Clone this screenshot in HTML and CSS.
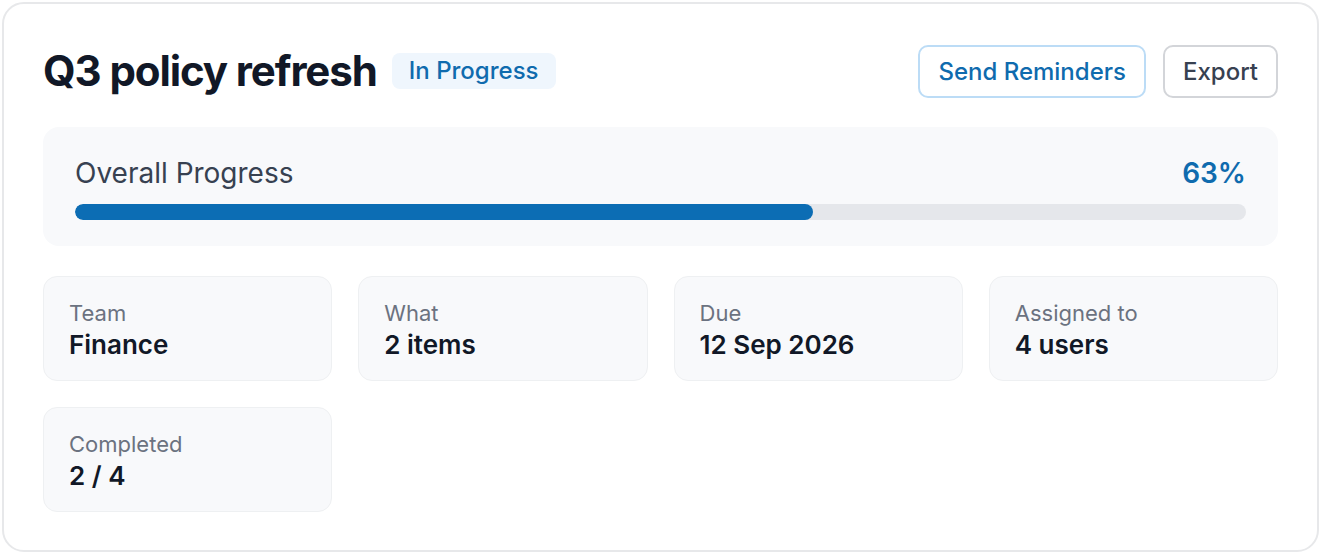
FILE: index.html
```html
<!DOCTYPE html>
<html>
<head>
<meta charset="utf-8">
<link rel="stylesheet" href="styles.css">
</head>
<body>
<div class="card">
  <div class="header">
    <div class="title-group">
      <h1 class="title">Q3 policy refresh</h1>
      <span class="badge">In Progress</span>
    </div>
    <div class="actions">
      <button class="btn btn-primary">Send Reminders</button>
      <button class="btn btn-default">Export</button>
    </div>
  </div>
  <div class="progress-panel">
    <div class="progress-head">
      <span class="progress-label">Overall Progress</span>
      <span class="progress-value">63%</span>
    </div>
    <div class="bar"><div class="bar-fill" style="width:63%"></div></div>
  </div>
  <div class="stats">
    <div class="stat"><div class="stat-label">Team</div><div class="stat-value">Finance</div></div>
    <div class="stat"><div class="stat-label">What</div><div class="stat-value">2 items</div></div>
    <div class="stat"><div class="stat-label">Due</div><div class="stat-value">12 Sep 2026</div></div>
    <div class="stat"><div class="stat-label">Assigned to</div><div class="stat-value">4 users</div></div>
    <div class="stat"><div class="stat-label">Completed</div><div class="stat-value">2 / 4</div></div>
  </div>
</div>
</body>
</html>
```

FILE: styles.css
```css
* { box-sizing: border-box; }
html, body { margin: 0; background: #ffffff; }
body {
  padding: 2px 1px 2px 2px;
  font-family: Inter, "Noto Sans", sans-serif;
  color: #111827;
}
.card {
  height: 550px;
  border: 2px solid #e7e8ea;
  border-radius: 22px;
  background: #fff;
  padding: 40px 39px 38px 39px;
}
.header {
  display: flex;
  align-items: center;
  justify-content: space-between;
  height: 54px;
}
.title-group { display: flex; align-items: center; gap: 15px; }
.title {
  margin: 0;
  font-size: 42px;
  font-weight: 700;
  letter-spacing: -1.1px;
  line-height: 1;
  color: #111827;
}
.badge {
  background: #eff6fd;
  color: #0f6bae;
  font-size: 24px;
  font-weight: 500;
  border-radius: 8px;
  padding: 5px 17px;
  line-height: 26px;
}
.actions { display: flex; gap: 17px; }
.btn {
  font-family: Inter, "Noto Sans", sans-serif;
  font-size: 24px;
  font-weight: 500;
  height: 53px;
  background: #fff;
  border-radius: 10px;
  padding: 0 18px;
  cursor: pointer;
}
.btn-primary { border: 2px solid #bcdcf6; color: #0f6bae; }
.btn-default { border: 2px solid #d3d5d9; color: #374151; }
.progress-panel {
  margin-top: 29px;
  background: #f8f9fb;
  border-radius: 16px;
  padding: 30px 32px 26px;
}
.progress-head {
  display: flex;
  justify-content: space-between;
  align-items: center;
  font-size: 28px;
  line-height: 32px;
}
.progress-label { color: #374151; font-weight: 400; }
.progress-value { color: #0f6bae; font-weight: 600; }
.bar {
  margin-top: 15px;
  height: 16px;
  background: #e5e7eb;
  border-radius: 8px;
  overflow: hidden;
}
.bar-fill { height: 100%; background: #0c6db4; border-radius: 8px; }
.stats {
  margin-top: 30px;
  display: grid;
  grid-template-columns: repeat(4, 1fr);
  gap: 26px;
}
.stat {
  height: 105px;
  background: #f8f9fb;
  border: 1px solid #eef0f2;
  border-radius: 14px;
  padding: 22px 25px;
}
.stat-label { font-size: 22px; color: #6b7280; line-height: 28px; }
.stat-value { font-size: 26px; font-weight: 600; color: #111827; line-height: 32px; margin-top: 2px; }
```
